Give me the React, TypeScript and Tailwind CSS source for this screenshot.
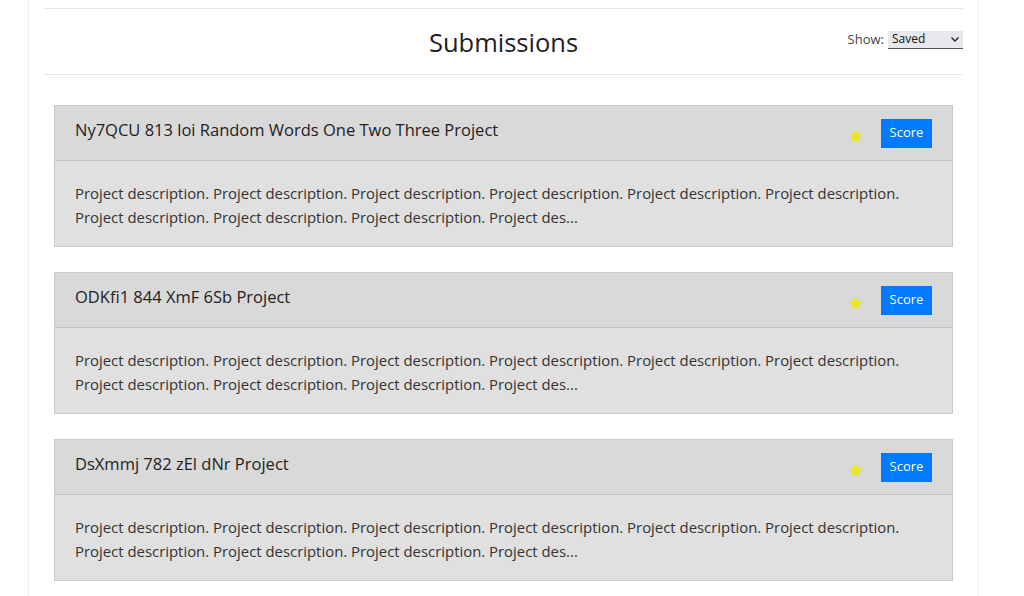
import React from "react";

const projects = [
  "Ny7QCU 813 loi Random Words One Two Three Project",
  "ODKfi1 844 XmF 6Sb Project",
  "DsXmmj 782 zEl dNr Project",
];

const desc =
  "Project description. Project description. Project description. Project description. Project description. Project description. Project description. Project description. Project description. Project des...";

function Star() {
  return (
    <svg width="16" height="16" viewBox="0 0 24 24" className="mt-[6px]">
      <path
        d="M12 1.8l3.1 6.9 7.4.7-5.6 5 1.6 7.3L12 17.9l-6.5 3.8 1.6-7.3-5.6-5 7.4-.7z"
        fill="#e8e81a"
      />
    </svg>
  );
}

export default function App() {
  return (
    <div
      className="w-[1024px] h-[596px] overflow-hidden bg-white flex"
      style={{ fontFamily: "'Open Sans', 'Noto Sans', sans-serif" }}
    >
      <div className="ml-[28px] w-[951px] h-full border-x border-[#eeeef6] pt-[8px] px-[15px]">
        <div className="border-y border-[#e6e6e6] h-[67px] flex items-center relative">
          <h1 className="w-full text-center text-[25.5px] text-[#222] leading-none mt-[3px]">
            Submissions
          </h1>
          <div className="absolute right-0 top-[21px] flex items-center gap-[4px] text-[13px] text-[#444]">
            <span>Show:</span>
            <div className="w-[75px] h-[18px] bg-[#e8e8ec] border-b border-[#555] flex items-center justify-between pl-[4px] pr-[3px] text-[12px] text-[#111]">
              <span>Saved</span>
              <svg width="10" height="10" viewBox="0 0 10 10">
                <path d="M1.5 3.5L5 7l3.5-3.5" stroke="#222" strokeWidth="1.4" fill="none" />
              </svg>
            </div>
          </div>
        </div>
        <div className="px-[10px] pt-[30px] flex flex-col gap-[25px]">
          {projects.map((p) => (
            <div key={p} className="border border-[#c9c9c9] bg-[#e0e0e0]">
              <div className="h-[55px] bg-[#d9d9d9] border-b border-[#c4c4c4] flex items-center justify-between pl-[20px] pr-[20px]">
                <div className="text-[16.5px] text-[#222] -mt-[6px]">{p}</div>
                <div className="flex items-center gap-[17px]">
                  <Star />
                  <button className="bg-[#007bff] text-white text-[13px] w-[51px] h-[29px]">
                    Score
                  </button>
                </div>
              </div>
              <div className="px-[20px] pt-[20px] pb-[17px] text-[14.9px] leading-[24px] text-[#333]">
                {desc}
              </div>
            </div>
          ))}
        </div>
      </div>
    </div>
  );
}
